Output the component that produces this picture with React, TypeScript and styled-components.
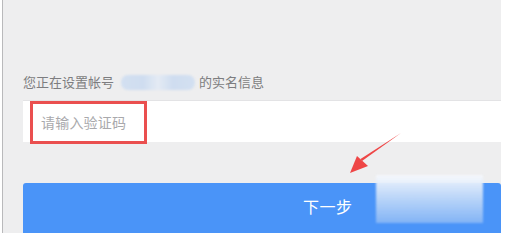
import React from 'react'
import styled, { createGlobalStyle } from 'styled-components'

const GlobalStyle = createGlobalStyle`
  html, body {
    margin: 0;
    padding: 0;
    background: #ffffff;
    overflow: hidden;
  }
  body {
    font-family: "Noto Sans CJK SC", "Noto Sans", sans-serif;
  }
`

// gray phone screen with a thin frame line on the left, white gap on the right
const Screen = styled.div`
  position: relative;
  width: 499px;
  height: 233px;
  margin-left: 2px;
  border-left: 1px solid #b9b9bb;
  background: #eeeeef;
  display: flex;
  flex-direction: column;
  padding-left: 20px;
  box-sizing: border-box;
  overflow: hidden;
`

const Label = styled.div`
  margin-top: 72px;
  height: 20px;
  line-height: 20px;
  font-size: 13px;
  color: #7d7d80;
  display: flex;
  align-items: center;
`

// blurred-out account number
const Masked = styled.span`
  display: inline-block;
  width: 74px;
  height: 15px;
  margin: 0 4px 0 7px;
  border-radius: 7px;
  background: linear-gradient(90deg, #d3e0f1 0%, #cfddf0 30%, #e4ebf4 50%, #cfddf0 70%, #d3e0f1 100%);
  filter: blur(1.2px);
`

const InputRow = styled.div`
  position: relative;
  margin-top: 8px;
  height: 45px;
  background: #ffffff;
  border-top: 1px solid #e3e3e5;
  box-sizing: border-box;
  display: flex;
  align-items: center;
  padding-left: 18px;
`

const Placeholder = styled.span`
  font-size: 14px;
  color: #a9a9ac;
  letter-spacing: 0.2px;
`

const Highlight = styled.div`
  position: absolute;
  left: 7px;
  top: 0px;
  width: 117px;
  height: 43px;
  border: 3px solid #ea4f4f;
  box-sizing: border-box;
`

const NextButton = styled.div`
  position: relative;
  margin-top: 41px;
  height: 52px;
  background: #4a94f8;
  border-radius: 3px 3px 0 0;
  display: flex;
  align-items: flex-start;
  padding: 12px 0 0 280px;
  box-sizing: border-box;
  color: #ffffff;
  font-size: 16px;
  line-height: 22px;
  letter-spacing: 0.5px;
`

// blurred white patch over the button
const Smudge = styled.div`
  position: absolute;
  left: 373px;
  top: 175px;
  width: 107px;
  height: 48px;
  background: linear-gradient(180deg, rgba(246, 248, 252, 0.97) 0%, rgba(200, 221, 248, 0.92) 45%, rgba(140, 185, 245, 0.85) 100%);
  filter: blur(1.2px);
`

const Arrow = styled.svg`
  position: absolute;
  left: 337px;
  top: 128px;
`

const App = () => {
  return (
    <>
      <GlobalStyle />
      <Screen>
        <Label>
          您正在设置帐号
          <Masked />
          的实名信息
        </Label>
        <InputRow>
          <Placeholder>请输入验证码</Placeholder>
          <Highlight />
        </InputRow>
        <NextButton>下一步</NextButton>
        <Smudge />
        <Arrow width="70" height="52" viewBox="0 0 70 52">
          <path d="M61 5 L22 33 L20.5 31 Z" fill="#ee4646" />
          <path d="M10 45 L17 28 L28 38 Z" fill="#ee4646" />
        </Arrow>
      </Screen>
    </>
  )
}

export default App
